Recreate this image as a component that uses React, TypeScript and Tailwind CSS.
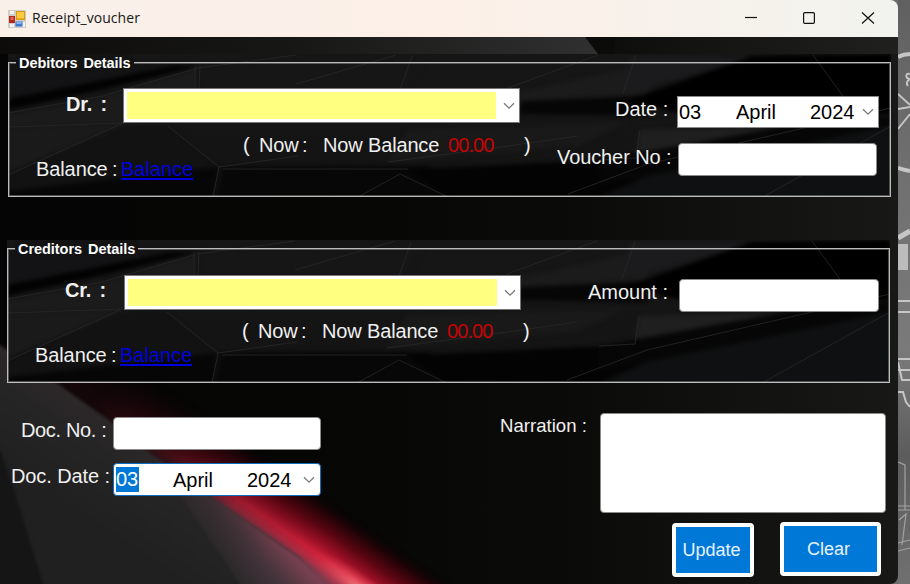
import React from "react";

const chevron = (
  <svg width="12" height="8" viewBox="0 0 12 8" fill="none" stroke="#7a7a7a" strokeWidth="1.3">
    <path d="M1 1.200L6 6.200L11 1.200" />
  </svg>
);

const label = "whitespace-pre leading-6 text-[20px] text-[#f0f0f0]";

function Facets() {
  return (
    <svg className="absolute inset-0 h-full w-full" viewBox="0 0 883 143" preserveAspectRatio="none">
      <defs>
        <linearGradient id="facetBase" x1="0" y1="0" x2="0" y2="1">
          <stop offset="0" stopColor="#161617" />
          <stop offset="0.75" stopColor="#141414" />
          <stop offset="1" stopColor="#080808" />
        </linearGradient>
        <filter id="facetSoft" x="-5%" y="-20%" width="110%" height="140%" colorInterpolationFilters="sRGB">
          <feGaussianBlur stdDeviation="2" />
        </filter>
      </defs>
      <rect width="883" height="143" fill="url(#facetBase)" />
      <g filter="url(#facetSoft)">
        <polygon points="0,10 190,10 0,48" fill="#131315" />
        <polygon points="0,45 165,12 192,12 100,34 0,56" fill="#020202" />
        <polygon points="0,60 100,42 188,14 188,60 118,70 0,73" fill="#1b1b1b" />
        <polygon points="0,74 115,70 0,118" fill="#1a1a1a" />
        <polygon points="0,120 120,72 160,72 212,115 208,143 0,143" fill="#121212" />
        <polygon points="0,137 210,113 205,143 0,143" fill="#060606" />
        <polygon points="196,10 420,2 392,50 370,55 190,60" fill="#161616" />
        <polygon points="510,38 650,8 640,40 512,48 400,56" fill="#1b1b1b" />
        <polygon points="514,47 640,42 640,62 512,60" fill="#060606" />
        <polygon points="400,75 620,68 570,92 380,108" fill="#191919" />
        <polygon points="215,113 420,112 500,143 210,143" fill="#070707" />
        <polygon points="400,116 640,104 640,143 440,143" fill="#030303" />
        <polygon points="622,4 745,4 614,40" fill="#1b1b1d" />
        <polygon points="745,2 883,0 883,60 700,66 620,46" fill="#000000" />
        <polygon points="632,76 780,72 640,100 628,98" fill="#1f1f1f" />
        <polygon points="780,72 883,62 883,78 640,124 592,130 592,106" fill="#060606" />
        <polygon points="640,122 883,72 883,143 592,143" fill="#0f1011" />
      </g>
      <g stroke="#282828" strokeWidth="0.800" fill="none">
        <path d="M0 59L95 42L190 14L288 1" />
        <path d="M0 73L115 69L0 121" />
        <path d="M160 72L211 113L205 143M211 113L290 102M215 115H400" />
        <path d="M187 12V60M192 12L190 58M288 30L388 1M392 36L404 2" />
        <path d="M500 34L590 1M380 108L500 92L570 82M350 143L392 120L440 143" />
        <path d="M615 39L628 1M632 76L628 104L592 106M560 140L640 110L883 54" />
        <path d="M755 143L883 72M805 1L835 42" />
      </g>
    </svg>
  );
}

function Backdrop() {
  return (
    <svg className="absolute inset-0" width="898" height="547" viewBox="0 37 898 547">
      <defs>
        <linearGradient id="wall" x1="0" y1="0" x2="1" y2="0">
          <stop offset="0" stopColor="#050505" />
          <stop offset="0.35" stopColor="#060605" />
          <stop offset="0.65" stopColor="#0b0b09" />
          <stop offset="1" stopColor="#181816" />
        </linearGradient>
        <linearGradient id="ridge" x1="0" y1="0" x2="1" y2="0">
          <stop offset="0" stopColor="#0d0c0b" />
          <stop offset="0.5" stopColor="#171716" />
          <stop offset="1" stopColor="#303030" />
        </linearGradient>
        <linearGradient id="rightRidge" x1="0" y1="0" x2="1" y2="0">
          <stop offset="0" stopColor="#0e0e0d" />
          <stop offset="1" stopColor="#20201e" />
        </linearGradient>
        <linearGradient id="slab" gradientUnits="userSpaceOnUse" x1="60" y1="500" x2="120" y2="410">
          <stop offset="0" stopColor="#202020" />
          <stop offset="0.6" stopColor="#262525" />
          <stop offset="1" stopColor="#30292b" />
        </linearGradient>
        <linearGradient id="wash" gradientUnits="userSpaceOnUse" x1="235" y1="570" x2="275" y2="535">
          <stop offset="0" stopColor="#2e2b2d" />
          <stop offset="0.5" stopColor="#45343b" />
          <stop offset="1" stopColor="#76404f" />
        </linearGradient>
        <linearGradient id="washFade" gradientUnits="userSpaceOnUse" x1="150" y1="453" x2="270" y2="545">
          <stop offset="0" stopColor="#fff" stopOpacity="0.1" />
          <stop offset="1" stopColor="#fff" stopOpacity="1" />
        </linearGradient>
        <linearGradient id="glow" gradientUnits="userSpaceOnUse" x1="300" y1="558" x2="338" y2="503">
          <stop offset="0" stopColor="#92364a" />
          <stop offset="0.1" stopColor="#b82a41" />
          <stop offset="0.2" stopColor="#cc1f39" />
          <stop offset="0.36" stopColor="#980f25" />
          <stop offset="0.55" stopColor="#5c0612" />
          <stop offset="0.78" stopColor="#210307" />
          <stop offset="1" stopColor="#050303" stopOpacity="0" />
        </linearGradient>
        <linearGradient id="fade" gradientUnits="userSpaceOnUse" x1="90" y1="410" x2="310" y2="560">
          <stop offset="0" stopColor="#fff" stopOpacity="0.08" />
          <stop offset="0.35" stopColor="#fff" stopOpacity="0.3" />
          <stop offset="0.65" stopColor="#fff" stopOpacity="0.75" />
          <stop offset="1" stopColor="#fff" stopOpacity="1" />
        </linearGradient>
        <radialGradient id="gleam" gradientUnits="userSpaceOnUse" cx="0" cy="0" r="1" gradientTransform="translate(360 588) rotate(35) scale(62 15)">
          <stop offset="0" stopColor="#ff8a8a" stopOpacity="0.75" />
          <stop offset="1" stopColor="#f04055" stopOpacity="0" />
        </radialGradient>
        <mask id="glowMask" maskUnits="userSpaceOnUse" x="0" y="0" width="898" height="640">
          <rect width="898" height="640" fill="url(#fade)" />
        </mask>
        <mask id="washMask" maskUnits="userSpaceOnUse" x="0" y="0" width="898" height="640">
          <rect width="898" height="640" fill="url(#washFade)" />
        </mask>
        <filter id="edge" colorInterpolationFilters="sRGB">
          <feGaussianBlur stdDeviation="1.500" />
        </filter>
      </defs>
      <rect y="37" width="898" height="547" fill="url(#wall)" />
      <rect y="37" width="598" height="17" fill="url(#ridge)" />
      <polygon points="585,37 640,37 620,54 598,54" fill="#0b0b0a" />
      <rect x="615" y="37" width="283" height="17" fill="url(#rightRidge)" />
      <g mask="url(#glowMask)">
        <polygon points="40,370 140,360 500,600 500,640 340,640 200,520" fill="url(#glow)" />
      </g>
      <polygon
        points="-15,335 58,384 110,421 150,453 210,496 300,558 340,600 -15,600"
        fill="url(#slab)"
        filter="url(#edge)"
      />
      <g mask="url(#washMask)">
        <polygon points="150,453 210,496 300,558 340,592 246,592 170,480" fill="url(#wash)" filter="url(#edge)" />
      </g>
      <polygon points="-15,440 0,450 14,490 48,600 -15,600" fill="#151515" filter="url(#edge)" />
      <rect x="250" y="520" width="180" height="64" fill="url(#gleam)" />
    </svg>
  );
}

function Desktop() {
  return (
    <svg className="h-full w-3 shrink-0" viewBox="0 0 12 584">
      <defs>
        <linearGradient id="stone" x1="0" y1="0" x2="0" y2="1">
          <stop offset="0" stopColor="#606060" />
          <stop offset="0.3" stopColor="#707070" />
          <stop offset="0.6" stopColor="#7a7a7a" />
          <stop offset="0.78" stopColor="#5c5c5c" />
          <stop offset="1" stopColor="#707070" />
        </linearGradient>
      </defs>
      <rect width="12" height="584" fill="url(#stone)" />
      <g stroke="#c6c6c6" strokeWidth="2" fill="none">
        <path d="M0 57Q5 54 12 54" strokeWidth="4" />
        <path d="M12 74Q7 73 9 78Q12 79 12 79Q7 82 10 86" />
        <path d="M0 94L12 105M0 109L12 107M0 129L12 114" />
        <path d="M0 168Q6 170 12 171" strokeWidth="4" />
        <path d="M0 238L12 231" strokeWidth="5" />
        <path d="M0 301H12M0 312H12" />
        <path d="M0 359H12M0 370H12M0 362L4 380H12M0 392H5L8 402L12 407" />
        <path d="M0 462L7 465V510M0 506H12M0 510H12M1 520L8 514L4 545M0 543L12 540M0 551L12 548" strokeWidth="1.200" stroke="#a2a2a2" />
      </g>
      <rect y="244" width="10" height="26" fill="#bcbcbc" />
    </svg>
  );
}

function AppIcon() {
  return (
    <svg width="18" height="18" viewBox="0 0 18 18">
      <rect width="18" height="18" fill="#cfcdca" />
      <path d="M2 1h4v3H2zM2 14h4v3H2zM14.500 12h2.500v5h-2.500z" fill="#f4f2ef" />
      <rect x="1" y="6" width="6" height="7" fill="#b5281e" />
      <rect x="2.500" y="7" width="3" height="3" fill="#dd6a5c" />
      <rect x="8" y="1" width="9" height="9" fill="#d79a12" />
      <rect x="9" y="2" width="7" height="6.500" fill="#fccb3c" />
      <rect x="7.500" y="11.500" width="7" height="5" fill="#3f78d0" />
      <rect x="8.500" y="12" width="5" height="2" fill="#86b3f0" />
    </svg>
  );
}

function Combo() {
  return (
    <div className="flex h-[35px] w-[397px] shrink-0 items-center border border-[#767676] bg-white pl-[3px]">
      <div className="h-[27px] w-[369px] bg-[#ffff80]" />
      <div className="flex flex-1 justify-center pl-[2px]">{chevron}</div>
    </div>
  );
}

function BalanceRows() {
  return (
    <>
      <div className={`flex h-6 pl-[235px] ${label}`}>
        <span className="w-4">(</span>
        <span className="w-[43px] tracking-[-0.2px]">Now</span>
        <span className="w-[21px]">:</span>
        <span className="w-[125px] tracking-[-0.15px]">Now Balance</span>
        <span className="w-[76px] tracking-[-0.9px] text-[#c40404]">00.00</span>
        <span>)</span>
      </div>
      <div className={`flex h-6 pl-[28px] ${label}`}>
        <span className="w-[76px] tracking-[-0.1px]">Balance</span>
        <span className="w-[9px]">:</span>
        <span className="text-[#0000dc] underline decoration-[1.5px] underline-offset-[2px]">Balance</span>
      </div>
    </>
  );
}

function Group({ title, children }: { title: string; children: React.ReactNode }) {
  return (
    <section className="relative flex h-[143px] w-[883px] shrink-0">
      <Facets />
      <div className="absolute inset-x-0 bottom-0 top-2 border-[1.5px] border-[#bcbcbc] outline-1 -outline-offset-2 outline-[#bcbcbc]/40" />
      <h2 className="absolute left-2 top-0 h-[18px] whitespace-pre bg-[#131314] pl-[3px] pr-[3px] text-[14.5px] font-bold leading-[18px] tracking-[-0.05px] text-white [word-spacing:2px]">
        {title}
      </h2>
      {children}
    </section>
  );
}

export default function App() {
  return (
    <div className="flex h-[584px] w-[910px] overflow-hidden bg-[#6c6c6c] font-['Liberation_Sans',Arial,sans-serif]">
      <main className="flex w-[898px] shrink-0 flex-col overflow-hidden rounded-r-lg">
        <header className="flex h-[37px] shrink-0 items-center bg-gradient-to-r from-[#f9f0ea] via-[#fcf0e8] to-[#f2f3ee] pl-2">
          <AppIcon />
          <h1 className="ml-[6px] flex-1 pb-[2px] font-['Open_Sans','Noto_Sans',sans-serif] text-[14px] tracking-[0.05px] text-[#161616]">
            Receipt_voucher
          </h1>
          <svg width="154" height="37" viewBox="0 0 154 37" fill="none" stroke="#111" strokeWidth="1.200">
            <path d="M1 17.500H13" />
            <rect x="59.600" y="12.600" width="10.800" height="10.800" rx="1.200" />
            <path d="M118 12.500L130 23.500M130 12.500L118 23.500" />
          </svg>
        </header>
        <div className="relative flex h-[547px] flex-col">
          <Backdrop />
          <div className="relative ml-2 mt-[17px]">
            <Group title="Debitors Details">
              <div className="relative w-[540px] pt-[34px]">
                <div className="mb-[10px] flex pl-[58px]">
                  <span className={`mt-1 w-[57px] font-bold tracking-[-0.2px] [word-spacing:3px] ${label}`}>Dr. :</span>
                  <Combo />
                </div>
                <BalanceRows />
              </div>
              <div className="relative pt-[42px]">
                <div className="flex pl-[67px]">
                  <span className={`mt-px w-[62px] ${label}`}>Date :</span>
                  <div className="flex h-8 w-[202px] items-center border border-[#8a8a8a] bg-white pl-px text-[20px] text-black">
                    <span className="w-[57px]">03</span>
                    <span className="w-[74px]">April</span>
                    <span className="w-[52px]">2024</span>
                    {chevron}
                  </div>
                </div>
                <div className="mt-[15px] flex pl-[9px]">
                  <span className={`mt-[2px] w-[121px] tracking-[-0.1px] ${label}`}>Voucher No :</span>
                  <div className="h-[33px] w-[199px] rounded-sm border border-[#8a8a8a] bg-white" />
                </div>
              </div>
            </Group>
          </div>
          <div className="relative ml-[7px] mt-[43px]">
            <Group title="Creditors Details">
              <div className="relative w-[540px] pt-[34px]">
                <div className="mb-[10px] flex pl-[58px] pt-px">
                  <span className={`mt-[3px] w-[59px] font-bold tracking-[-0.2px] [word-spacing:3px] ${label}`}>Cr. :</span>
                  <Combo />
                </div>
                <div className="-mt-px">
                  <BalanceRows />
                </div>
              </div>
              <div className="relative pl-[41px] pt-[39px]">
                <div className="flex">
                  <span className={`mt-px w-[91px] ${label}`}>Amount :</span>
                  <div className="h-[33px] w-[200px] rounded-sm border border-[#8a8a8a] bg-white" />
                </div>
              </div>
            </Group>
          </div>
          <div className="relative flex flex-1">
            <div className="w-[490px] pt-[34px]">
              <div className="flex pl-[21px]">
                <span className={`mt-px w-[92px] tracking-[-0.35px] ${label}`}>Doc. No. :</span>
                <div className="h-[33px] w-[208px] rounded-sm border border-[#8a8a8a] bg-white" />
              </div>
              <div className="mt-[13px] flex pl-[11px]">
                <span className={`mt-px w-[102px] tracking-[-0.1px] ${label}`}>Doc. Date :</span>
                <div className="flex h-[33px] w-[208px] items-center rounded-sm border border-[#0f6cbd] bg-white pl-[2px] text-[20px] text-black">
                  <span className="mr-[34px] h-[25px] w-[23px] bg-[#0078d7] leading-[25px] text-white">03</span>
                  <span className="w-[74px]">April</span>
                  <span className="w-[56px]">2024</span>
                  {chevron}
                </div>
              </div>
            </div>
            <div className="pt-[30px]">
              <div className="flex pl-[10px]">
                <span className="mt-px w-[100px] whitespace-pre text-[18.6px] leading-6 text-[#f0f0f0]">Narration :</span>
                <div className="h-[100px] w-[286px] rounded-sm border border-[#8a8a8a] bg-white" />
              </div>
              <div className="mt-[9px] flex items-start pl-[182px] text-[18px] text-[#e8f2ff]">
                <button className="mt-px h-[54px] w-[82px] rounded-[4px] border-4 border-white bg-[#0078d7] pr-[3px] pt-px">
                  Update
                </button>
                <button className="ml-[26px] h-[54px] w-[101px] rounded-[4px] border-4 border-white bg-[#0078d7] pr-[4px]">
                  Clear
                </button>
              </div>
            </div>
          </div>
        </div>
      </main>
      <Desktop />
    </div>
  );
}
